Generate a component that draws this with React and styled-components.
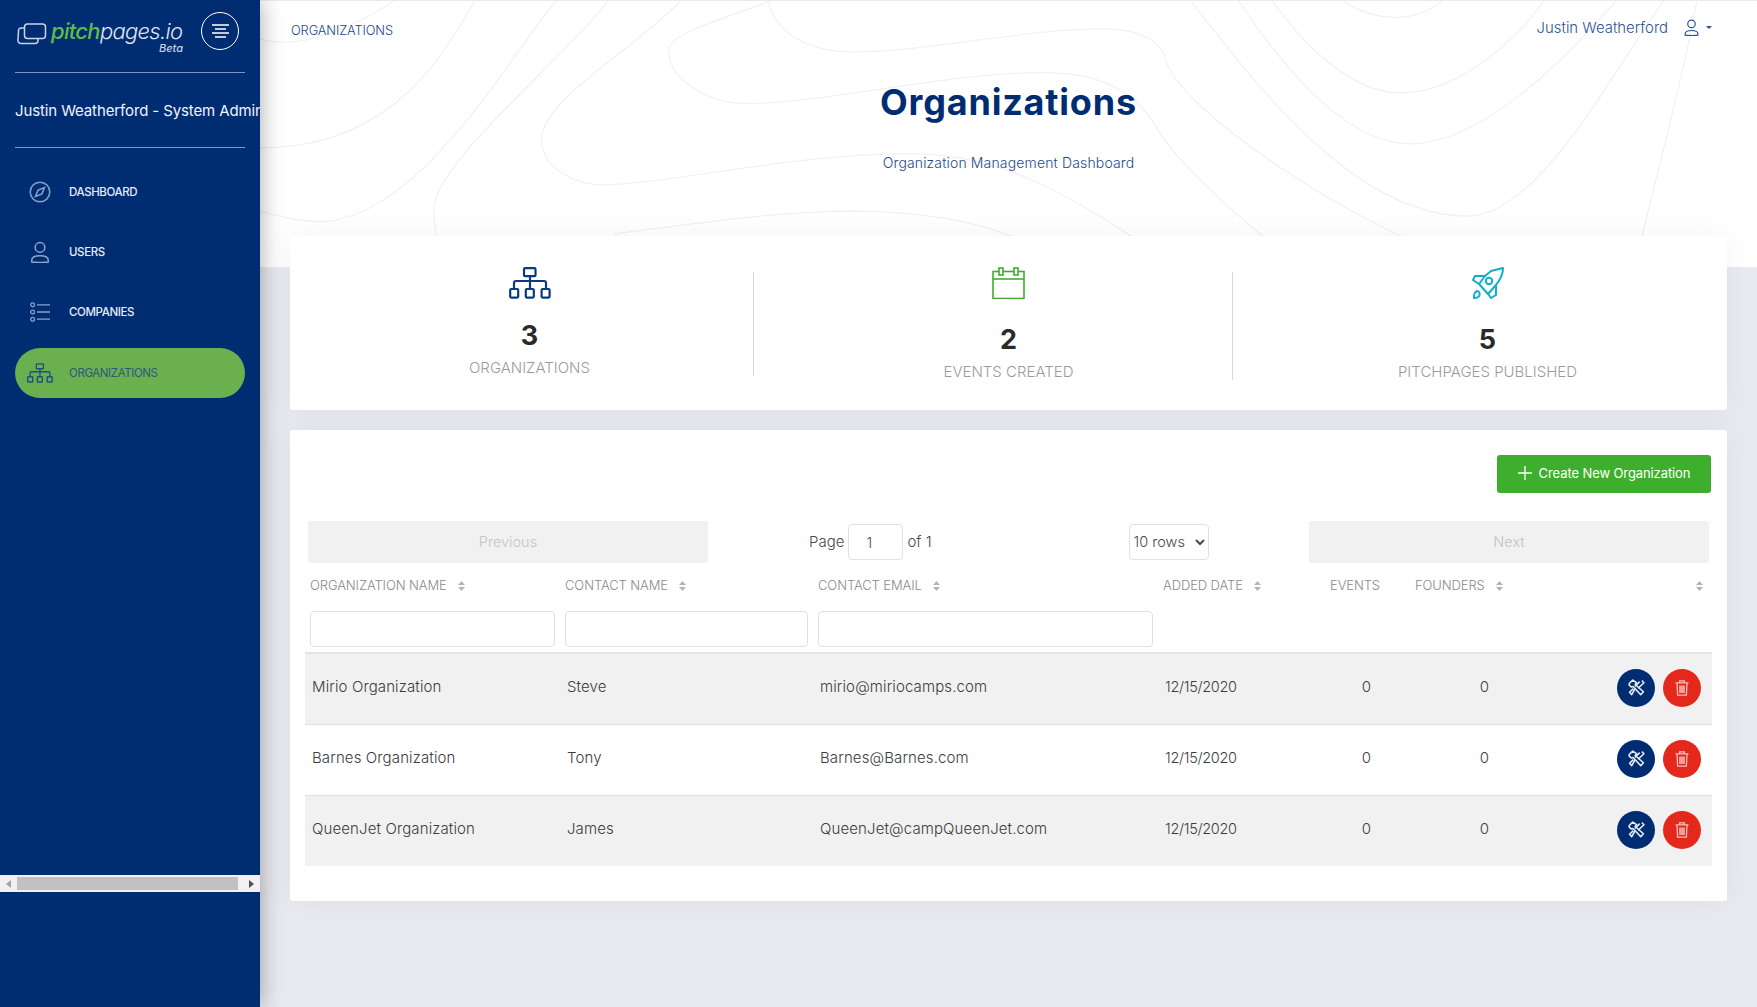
import React from 'react';
import styled, { createGlobalStyle } from 'styled-components';

const NAVY = '#002d72';
const GREEN = '#3eaf2c';

const GlobalStyle = createGlobalStyle`
   html, body {
      margin: 0;
      padding: 0;
      height: 100%;
      background: #e9eaf0;
      font-family: "Inter", "Noto Sans", sans-serif;
      overflow: hidden;
   }
   * {
      box-sizing: border-box;
   }
`;

const Page = styled.div`
   display: flex;
   width: 1757px;
   height: 1007px;
`;

const Sidebar = styled.aside`
   width: 260px;
   flex-shrink: 0;
   height: 100%;
   background: ${NAVY};
   box-shadow: 0 0 22px rgba(0, 0, 0, 0.35);
   position: relative;
   z-index: 2;
`;

const SidebarScroll = styled.div`
   height: 875px;
   overflow: hidden;
   padding: 0 15px;
`;

const LogoRow = styled.div`
   height: 73px;
   display: flex;
   align-items: flex-start;
   padding-top: 12px;
   border-bottom: 1px solid #7f96b8;
`;

const LogoMark = styled.svg`
   width: 30px;
   height: 22px;
   margin: 11px 0 0 2px;
   flex-shrink: 0;
`;

const LogoWords = styled.div`
   margin-left: 4px;
   font-style: italic;
   color: #dfe5f0;
   font-size: 22px;
   line-height: 24px;
   letter-spacing: -0.7px;
   width: 132px;
   font-weight: 300;
   padding-top: 7px;

   b {
      color: #5fbb49;
      font-weight: 500;
   }

   small {
      display: block;
      font-size: 11px;
      line-height: 11px;
      font-weight: 500;
      letter-spacing: 0;
      text-align: right;
      color: #c6d0e2;
   }
`;

const MenuToggle = styled.button`
   width: 38px;
   height: 38px;
   margin: 0 0 0 18px;
   flex-shrink: 0;
   border-radius: 50%;
   background: transparent;
   border: 1.5px solid #fff;
   padding: 0;
   display: flex;
   align-items: center;
   justify-content: center;
`;

const UserLine = styled.div`
   height: 74px;
   line-height: 75px;
   white-space: nowrap;
   color: #f0f3f8;
   font-size: 15px;
   font-weight: 400;
   letter-spacing: -0.12px;
   width: 245px;
   overflow: hidden;
`;

const Rule = styled.div`
   height: 1px;
   background: #7f96b8;
`;

const NavList = styled.nav`
   padding-top: 14px;
   display: flex;
   flex-direction: column;
`;

const NavItem = styled.div`
   display: flex;
   align-items: center;
   height: ${(p) => (p.$active ? '50px' : '60px')};
   margin-top: ${(p) => (p.$active ? '6px' : '0')};
   background: ${(p) => (p.$active ? '#6ab04f' : 'transparent')};
   border-radius: 25px;
   color: ${(p) => (p.$active ? '#2a5a78' : '#e6ebf3')};
   font-size: 11.5px;
   font-weight: ${(p) => (p.$active ? 400 : 500)};
   letter-spacing: -0.4px;
   padding-left: 54px;
   position: relative;

   svg {
      position: absolute;
      left: 25px;
      top: 50%;
      transform: translate(-50%, -50%);
   }
`;

const FakeScrollbar = styled.div`
   height: 17px;
   background: #f1f1f1;
   display: flex;
   align-items: center;
   padding: 0 6px;
`;

const ScrollThumb = styled.div`
   flex: 1;
   height: 13px;
   margin: 0 11px 0 6px;
   background: #c1c1c1;
`;

const ScrollArrow = styled.span`
   width: 0;
   height: 0;
   border-top: 4px solid transparent;
   border-bottom: 4px solid transparent;
   border-right: ${(p) => (p.$left ? '5px solid #a3a3a3' : '0')};
   border-left: ${(p) => (p.$left ? '0' : '5px solid #505050')};
`;

const Main = styled.main`
   flex: 1;
   min-width: 0;
`;

const Hero = styled.header`
   position: relative;
   height: 267px;
   background: #fff;
   border-top: 1px solid #e9eaf0;
   overflow: hidden;
`;

const TopoLines = styled.svg`
   position: absolute;
   inset: 0;
   width: 100%;
   height: 100%;

   path {
      vector-effect: non-scaling-stroke;
   }
`;

const HeroInner = styled.div`
   position: relative;
   display: flex;
   flex-direction: column;
   align-items: center;
`;

const TopBar = styled.div`
   width: 100%;
   display: flex;
   justify-content: space-between;
   padding: 16px 45px 0 31px;
`;

const Crumb = styled.div`
   font-size: 12.8px;
   font-weight: 300;
   letter-spacing: -0.1px;
   color: #1f4a8a;
   margin-top: 6px;
   line-height: 15px;
`;

const UserMenu = styled.div`
   display: flex;
   align-items: center;
   color: #2d5591;
   font-size: 14.9px;
   line-height: 20px;
   font-weight: 300;

   svg {
      margin-left: 15px;
   }
`;

const Caret = styled.span`
   width: 0;
   height: 0;
   margin-left: 6px;
   border-left: 3px solid transparent;
   border-right: 3px solid transparent;
   border-top: 3px solid #2d5591;
`;

const Title = styled.h1`
   margin: 42px 0 0;
   font-size: 36px;
   line-height: 44px;
   font-weight: 700;
   color: ${NAVY};
   letter-spacing: 0.8px;
`;

const Subtitle = styled.p`
   margin: 30px 0 0;
   font-size: 14px;
   line-height: 18px;
   font-weight: 300;
   color: #1f4a8a;
   letter-spacing: 0.15px;
`;

const Card = styled.section`
   position: relative;
   background: #fff;
   border-radius: 3px;
   margin: 0 30px;
   box-shadow: 0 0 30px rgba(0, 0, 0, 0.05);
`;

const StatsCard = styled(Card)`
   margin-top: -31px;
   height: 174px;
   display: grid;
   grid-template-columns: repeat(3, 1fr);
`;

const Stat = styled.div`
   position: relative;
   display: flex;
   flex-direction: column;
   align-items: center;
   padding-top: 31px;

   &:not(:last-child)::after {
      content: '';
      position: absolute;
      right: 15px;
      top: 36px;
      height: ${(p) => (p.$tall ? '108px' : '104px')};
      width: 1px;
      background: #d8d8d8;
   }
`;

const StatIcon = styled.div`
   height: 32px;
   display: flex;
   align-items: center;
`;

const StatValue = styled.div`
   font-size: 27px;
   line-height: 32px;
   font-weight: 700;
   color: #2a2a2a;
   margin-top: ${(p) => (p.$low ? '25px' : '21px')};
`;

const StatLabel = styled.div`
   font-size: 15px;
   line-height: 20px;
   font-weight: 300;
   color: #9b9b9b;
   margin-top: 6px;
`;

const TableCard = styled(Card)`
   margin-top: 20px;
   height: 471px;
   padding: 25px 15px 0;
`;

const Toolbar = styled.div`
   display: flex;
   justify-content: flex-end;
   padding-right: 1px;
`;

const CreateButton = styled.button`
   display: flex;
   align-items: center;
   justify-content: center;
   gap: 7px;
   width: 214px;
   height: 38px;
   padding: 0 0 2px;
   background: ${GREEN};
   color: #fff;
   border: 0;
   border-radius: 3px;
   font-family: inherit;
   font-size: 13px;
   letter-spacing: -0.1px;
`;

const Pager = styled.div`
   display: flex;
   align-items: center;
   margin: 28px 3px 0;
   height: 42px;
`;

const PagerButton = styled.button`
   width: 400px;
   height: 42px;
   padding: 0 0 2px;
   border: 0;
   border-radius: 3px;
   background: #f1f1f1;
   color: #c4c4c4;
   font-family: inherit;
   font-size: 14.5px;
   font-weight: 300;
`;

const PagerMiddle = styled.div`
   flex: 1;
   display: flex;
   align-items: center;
   padding-left: 101px;
   gap: 197px;
`;

const PageJump = styled.div`
   display: flex;
   align-items: center;
   gap: 4px;
   color: #4a4a4a;
   font-size: 15px;
   line-height: 34px;
   font-weight: 300;
`;

const PageInput = styled.input`
   width: 55px;
   height: 36px;
   border: 1px solid #dee2e6;
   border-radius: 4px;
   padding: 0 17px;
   font-family: inherit;
   font-size: 14.5px;
   font-weight: 300;
   color: #4a4a4a;
`;

const RowsSelect = styled.select`
   width: 80px;
   height: 36px;
   border: 1px solid #dee2e6;
   border-radius: 4px;
   background: #fff;
   padding: 0 0 2px;
   font-family: inherit;
   font-size: 14.5px;
   font-weight: 300;
   color: #4a4a4a;
`;

const Table = styled.table`
   width: 1407px;
   margin-top: 3px;
   table-layout: fixed;
   border-collapse: collapse;
`;

const HeadCell = styled.th`
   height: 39px;
   padding: 0 0 1px ${(p) => (p.$inset ? '8px' : '5px')};
   text-align: left;
   font-size: 13px;
   font-weight: 300;
   color: #8a8a8a;
   letter-spacing: -0.1px;
   white-space: nowrap;

   svg {
      margin-left: 11px;
      vertical-align: -1px;
   }
`;

const EndHead = styled(HeadCell)`
   text-align: right;
   padding-right: 9px;
`;

const FilterCell = styled.td`
   height: 48px;
   padding: 6px 0 5px 5px;
   vertical-align: top;
   border-bottom: 2px solid #e3e4ea;
`;

const FilterInput = styled.input`
   display: block;
   width: calc(100% - 5px);
   height: 36px;
   border: 1px solid #dee2e6;
   border-radius: 4px;
   background: #fff;
`;

const Row = styled.tr`
   height: 71px;
   background: ${(p) => (p.$striped ? '#f1f1f1' : '#fff')};
   border-bottom: 1px solid #dee2e6;

   &:last-child {
      border-bottom: 0;
   }
`;

const Cell = styled.td`
   padding: 0 0 4px ${(p) => (p.$center ? '1px' : '7px')};
   font-size: 15px;
   font-weight: 300;
   color: #3c3c3c;
   letter-spacing: 0.12px;
   text-align: ${(p) => (p.$center ? 'center' : 'left')};
   white-space: nowrap;
`;

const DateCell = styled(Cell)`
   font-size: 14.5px;
   letter-spacing: -0.3px;
`;

const ActionCell = styled.td`
   padding: 0 11px 2px 0;
`;

const Actions = styled.div`
   display: flex;
   justify-content: flex-end;
   gap: 8px;
`;

const RoundButton = styled.button`
   width: 38px;
   height: 38px;
   border: 0;
   border-radius: 50%;
   padding: 0;
   background: ${(p) => p.$bg};
   display: flex;
   align-items: center;
   justify-content: center;
`;

const Sitemap = ({ width, color }) => (
   <svg width={width} viewBox="0 0 42 32" fill="none" stroke={color} strokeWidth="2.2">
      <rect x="15" y="1.2" width="11.5" height="8" rx="1" />
      <path d="M21 9.2V21M5 21v-5a2 2 0 0 1 2-2h28a2 2 0 0 1 2 2v5" />
      <rect x="1.2" y="22" width="8" height="8.6" rx="1" />
      <rect x="16.8" y="22" width="8" height="8.6" rx="1" />
      <rect x="32.6" y="22" width="8" height="8.6" rx="1" />
   </svg>
);

const Compass = () => (
   <svg width="22" height="22" viewBox="0 0 22 22" fill="none" stroke="#8da2c4" strokeWidth="1.5">
      <circle cx="11" cy="11" r="9.8" />
      <path d="M15.5 6.5l-2.6 6.4-6.4 2.6 2.6-6.4z" />
   </svg>
);

const Person = ({ size = 22, color = '#8da2c4' }) => (
   <svg width={size} height={size} viewBox="0 0 20 20" fill="none" stroke={color} strokeWidth="1.4">
      <circle cx="10" cy="5.8" r="4.4" />
      <path d="M2.5 19v-1.5c0-2.6 3-4 7.5-4s7.5 1.4 7.5 4V19c-3 .6-12 .6-15 0z" />
   </svg>
);

const ListIcon = () => (
   <svg width="20" height="20" viewBox="0 0 20 20" fill="none" stroke="#8da2c4" strokeWidth="1.3">
      <circle cx="2.6" cy="2.8" r="1.9" />
      <circle cx="2.6" cy="10" r="1.9" />
      <circle cx="2.6" cy="17.2" r="1.9" />
      <path d="M7 2.8h13M7 10h13M7 17.2h13" />
   </svg>
);

const SortIcon = () => (
   <svg width="7" height="10" viewBox="0 0 7 10" fill="#b5b5b5">
      <path d="M3.5 0L7 4H0zM3.5 10L0 6h7z" />
   </svg>
);

const ToolsIcon = () => (
   <svg width="17" height="17" viewBox="0 0 16 16" fill="none" stroke="#e4eaf4" strokeWidth="1.5" strokeLinejoin="round">
      <path d="M13 1.5L15 3.5 9.5 8.7M6.5 7L11 2.5M6.5 9.5L3.5 14.8 1.5 12.5 5 9" />
      <path d="M1.5 3.8L4.5 1 8 3.5 6.8 5.2 14.5 12 12 14.8 4.8 7 3 7.5 1 5.5Z" />
   </svg>
);

const TrashIcon = () => (
   <svg width="14" height="16" viewBox="0 0 14 16" fill="none" stroke="#f6c0ba" strokeWidth="1.3">
      <path d="M0.5 2.8h13M4.6 2.8V.8h4.8v2M2 2.8l.6 12.4h8.8l.6-12.4" />
      <path d="M5 5.5v7.5M7 5.5v7.5M9 5.5v7.5" stroke="#fff" strokeWidth="1.1" />
   </svg>
);

const organizations = [
   { name: 'Mirio Organization', contact: 'Steve', email: 'mirio@miriocamps.com' },
   { name: 'Barnes Organization', contact: 'Tony', email: 'Barnes@Barnes.com' },
   { name: 'QueenJet Organization', contact: 'James', email: 'QueenJet@campQueenJet.com' },
];

const App = () => {
   return (
      <Page>
         <GlobalStyle />
         <Sidebar>
            <SidebarScroll>
               <LogoRow>
                  <LogoMark viewBox="0 0 30 22" fill="none" stroke="#c9d3e4" strokeWidth="1.5">
                     <rect x="7.5" y="1" width="21" height="14.5" rx="3" />
                     <path d="M7.5 5H4a2.5 2.5 0 0 0-2.5 2.5L1 17a3 3 0 0 0 3 3.5h14a3 3 0 0 0 3-3v-2" />
                  </LogoMark>
                  <LogoWords>
                     <b>pitch</b>pages.io
                     <small>Beta</small>
                  </LogoWords>
                  <MenuToggle>
                     <svg width="17" height="14" viewBox="0 0 17 14" stroke="#fff" strokeWidth="1.4">
                        <path d="M0 1h17M3 5h11M0 9h17M3 13h11" />
                     </svg>
                  </MenuToggle>
               </LogoRow>
               <UserLine>Justin Weatherford - System Admin</UserLine>
               <Rule />
               <NavList>
                  <NavItem><Compass />DASHBOARD</NavItem>
                  <NavItem><Person />USERS</NavItem>
                  <NavItem><ListIcon />COMPANIES</NavItem>
                  <NavItem $active><Sitemap width={26} color="#1d4f80" />ORGANIZATIONS</NavItem>
               </NavList>
            </SidebarScroll>
            <FakeScrollbar>
               <ScrollArrow $left />
               <ScrollThumb />
               <ScrollArrow />
            </FakeScrollbar>
         </Sidebar>

         <Main>
            <Hero>
               <TopoLines viewBox="0 0 1568 810" preserveAspectRatio="none" fill="none" stroke="#f1f1f3" strokeWidth="1.2">
                  <path d="M140 0C120 40 70 120 30 125C15 128 5 120 0 115" />
                  <path d="M225 0C200 120 150 420 20 445L0 447" />
                  <path d="M310 0C270 130 170 660 65 672C40 672 20 655 0 640" />
                  <path d="M365 0C310 200 180 500 182 640C182 670 186 740 190 810" />
                  <path d="M440 0C400 130 295 300 295 420C295 510 330 560 360 560C420 560 560 465 680 465C780 465 850 590 960 810" />
                  <path d="M535 0C480 60 428 100 428 150C428 240 470 312 510 312C590 312 720 218 820 218C890 218 920 290 940 390C960 490 1020 650 1090 810" />
                  <path d="M532 0C540 90 570 155 620 155C700 155 800 85 880 85C930 85 945 130 950 190C970 340 1130 660 1270 810" />
                  <path d="M975 0C1030 200 1140 655 1265 655C1340 655 1420 200 1470 0" />
                  <path d="M1025 0C1060 150 1130 435 1205 435C1280 435 1370 170 1420 0" />
                  <path d="M1060 0C1090 120 1140 280 1195 280C1260 280 1320 100 1345 0" />
                  <path d="M1135 0C1150 30 1170 50 1190 50C1210 50 1225 30 1238 0" />
                  <path d="M1505 0C1490 250 1460 550 1440 810" />
                  <path d="M370 710C450 680 540 640 620 640C690 640 750 670 790 720" />
               </TopoLines>
               <HeroInner>
                  <TopBar>
                     <Crumb>ORGANIZATIONS</Crumb>
                     <UserMenu>
                        Justin Weatherford
                        <Person size={17} color="#2d5591" />
                        <Caret />
                     </UserMenu>
                  </TopBar>
                  <Title>Organizations</Title>
                  <Subtitle>Organization Management Dashboard</Subtitle>
               </HeroInner>
            </Hero>

            <StatsCard>
               <Stat>
                  <StatIcon><Sitemap width={42} color="#0b3a80" /></StatIcon>
                  <StatValue>3</StatValue>
                  <StatLabel>ORGANIZATIONS</StatLabel>
               </Stat>
               <Stat $tall>
                  <StatIcon>
                     <svg width="33" height="32" viewBox="0 0 33 32" fill="none" stroke={GREEN} strokeWidth="1.6">
                        <rect x="1" y="4.5" width="31" height="27" />
                        <path d="M1 12h31" />
                        <rect x="7" y="1" width="4" height="7" fill="#fff" />
                        <rect x="22" y="1" width="4" height="7" fill="#fff" />
                     </svg>
                  </StatIcon>
                  <StatValue $low>2</StatValue>
                  <StatLabel>EVENTS CREATED</StatLabel>
               </Stat>
               <Stat>
                  <StatIcon>
                     <svg width="32" height="32" viewBox="0 0 32 32" fill="none" stroke="#12aecb" strokeWidth="2" strokeLinejoin="round">
                        <path d="M31 1L19 4 13 9 3 9 1 13 7 17 16 27 19 31 24 28 24 18C28 13 31 8 31 1Z" />
                        <path d="M13 9L7 17M24 18L16 27" />
                        <circle cx="17" cy="14" r="3.2" />
                        <path d="M5 24C7 24 8 26 7.5 28 7 30 4 31 2 31 1.5 28 3 25 5 24Z" />
                     </svg>
                  </StatIcon>
                  <StatValue $low>5</StatValue>
                  <StatLabel>PITCHPAGES PUBLISHED</StatLabel>
               </Stat>
            </StatsCard>

            <TableCard>
               <Toolbar>
                  <CreateButton>
                     <svg width="14" height="14" viewBox="0 0 14 14" stroke="#fff" strokeWidth="1.3">
                        <path d="M7 0v14M0 7h14" />
                     </svg>
                     Create New Organization
                  </CreateButton>
               </Toolbar>
               <Pager>
                  <PagerButton disabled>Previous</PagerButton>
                  <PagerMiddle>
                     <PageJump>
                        Page <PageInput defaultValue="1" /> of 1
                     </PageJump>
                     <RowsSelect defaultValue="10">
                        <option value="10">10 rows</option>
                        <option value="25">25 rows</option>
                     </RowsSelect>
                  </PagerMiddle>
                  <PagerButton disabled>Next</PagerButton>
               </Pager>
               <Table>
                  <colgroup>
                     <col width="255" />
                     <col width="253" />
                     <col width="345" />
                     <col width="164" />
                     <col width="88" />
                     <col width="148" />
                     <col width="154" />
                  </colgroup>
                  <thead>
                     <tr>
                        <HeadCell>ORGANIZATION NAME<SortIcon /></HeadCell>
                        <HeadCell>CONTACT NAME<SortIcon /></HeadCell>
                        <HeadCell>CONTACT EMAIL<SortIcon /></HeadCell>
                        <HeadCell>ADDED DATE<SortIcon /></HeadCell>
                        <HeadCell $inset>EVENTS</HeadCell>
                        <HeadCell>FOUNDERS<SortIcon /></HeadCell>
                        <EndHead><SortIcon /></EndHead>
                     </tr>
                     <tr>
                        <FilterCell><FilterInput /></FilterCell>
                        <FilterCell><FilterInput /></FilterCell>
                        <FilterCell><FilterInput /></FilterCell>
                        <FilterCell colSpan={4} />
                     </tr>
                  </thead>
                  <tbody>
                     {organizations.map((org, i) => (
                        <Row key={org.name} $striped={i % 2 === 0}>
                           <Cell>{org.name}</Cell>
                           <Cell>{org.contact}</Cell>
                           <Cell>{org.email}</Cell>
                           <DateCell>12/15/2020</DateCell>
                           <Cell $center>0</Cell>
                           <Cell $center>0</Cell>
                           <ActionCell>
                              <Actions>
                                 <RoundButton $bg={NAVY}><ToolsIcon /></RoundButton>
                                 <RoundButton $bg="#e5281c"><TrashIcon /></RoundButton>
                              </Actions>
                           </ActionCell>
                        </Row>
                     ))}
                  </tbody>
               </Table>
            </TableCard>
         </Main>
      </Page>
   );
};

export default App;
